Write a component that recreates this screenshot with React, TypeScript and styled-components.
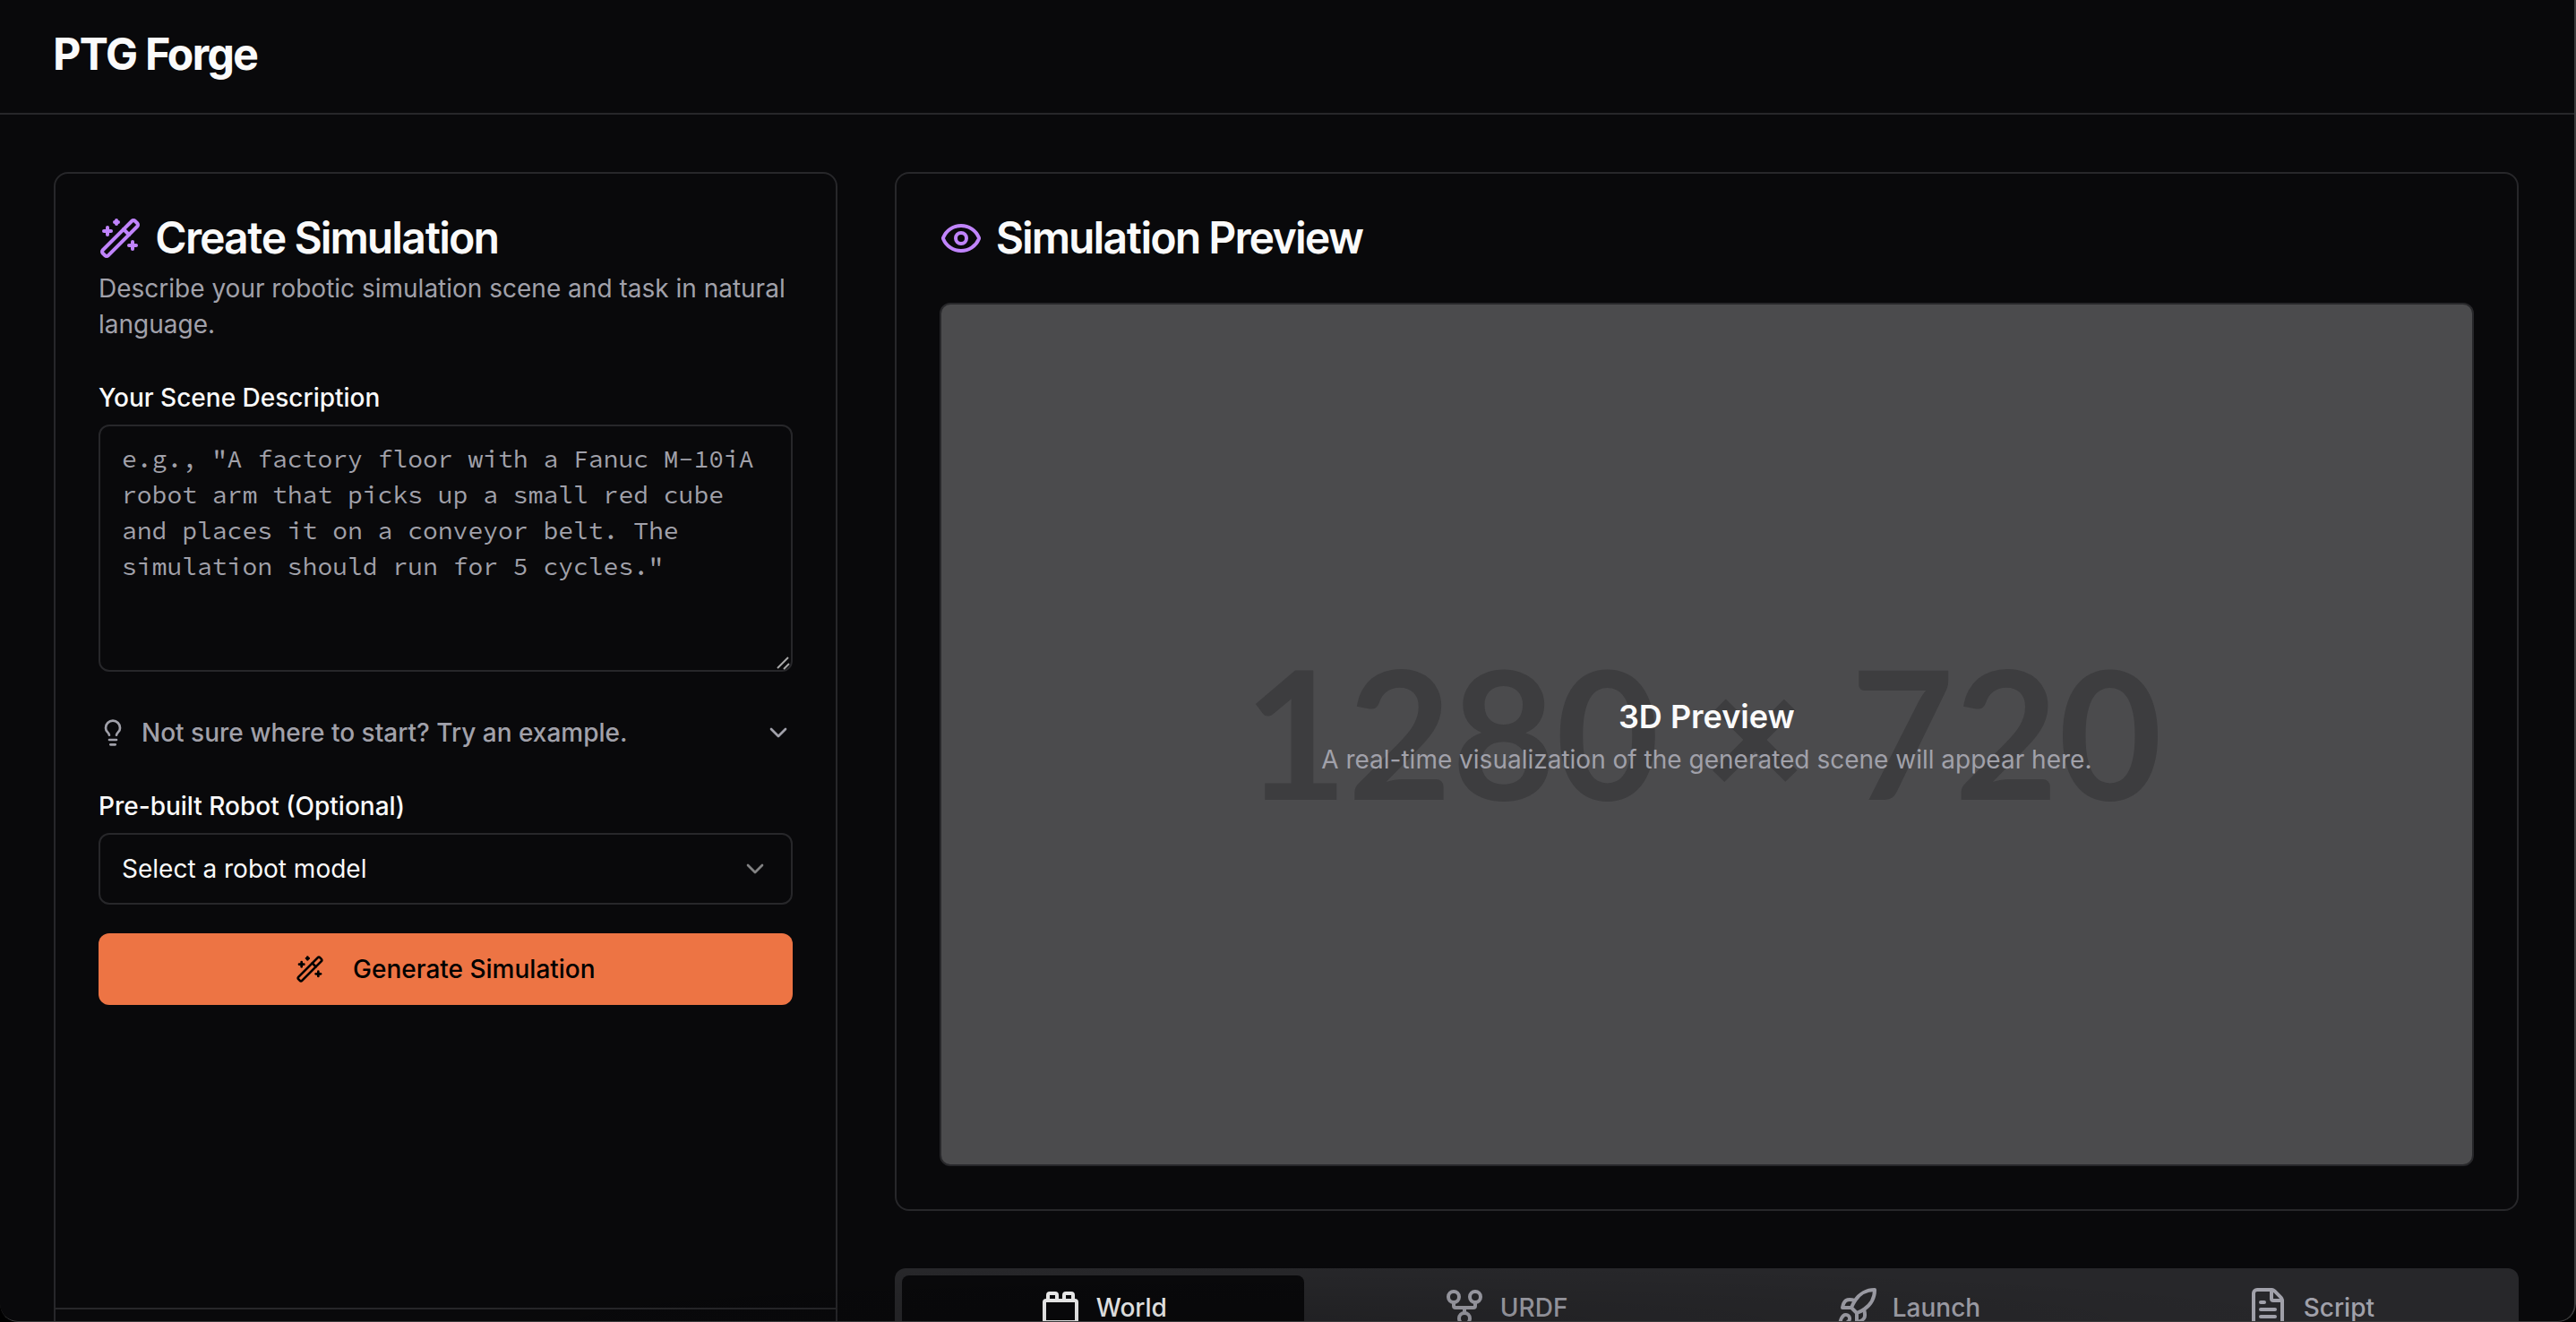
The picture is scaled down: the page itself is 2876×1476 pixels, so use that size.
import React from "react";
import styled, { createGlobalStyle } from "styled-components";
import {
  ChevronDown,
  Eye,
  FileText,
  GitFork,
  Lightbulb,
  Rocket,
  ToyBrick,
  WandSparkles,
} from "lucide-react";

const color = {
  background: "#09090b",
  foreground: "#fafafa",
  muted: "#27272a",
  mutedText: "#a1a1aa",
  primary: "#ed7444",
  accent: "#c084fc",
  frame: "#3b3b3c",
};

const headingFont = `"Inter Tight", "Inter Display", Inter, "Liberation Sans", sans-serif`;

const GlobalStyle = createGlobalStyle`
  *, *::before, *::after { box-sizing: border-box; }
  body {
    margin: 0;
    background: #000;
    color: ${color.foreground};
    font-family: Inter, "Liberation Sans", sans-serif;
    font-size: 28px;
    line-height: 40px;
  }
  h1, h2, h3, p { margin: 0; }
  button, select, textarea { font: inherit; color: inherit; }
`;

const Shell = styled.div`
  position: relative;
  height: 100vh;
  overflow: hidden;
  background: ${color.background};
  border-radius: 0 0 20px 20px;

  &::after {
    content: "";
    position: absolute;
    inset: 0;
    background: radial-gradient(ellipse 42% 64px at 50% 100%, rgba(0, 0, 0, 0.16), transparent);
    border: 2px solid ${color.frame};
    border-width: 0 2px 1px 0;
    border-radius: inherit;
    pointer-events: none;
  }
`;

const Header = styled.header`
  display: flex;
  align-items: center;
  height: 128px;
  padding: 0 64px 4px 60px;
  border-bottom: 2px solid ${color.muted};
`;

const Brand = styled.h1`
  font-family: ${headingFont};
  font-size: 48px;
  line-height: 64px;
  font-weight: 700;
`;

const Main = styled.main`
  display: grid;
  grid-template-columns: repeat(3, minmax(0, 1fr));
  gap: 64px;
  padding: 64px 64px 64px 60px;
`;

const Column = styled.div`
  grid-column: span 2;
  display: flex;
  flex-direction: column;
  gap: 64px;
`;

const Card = styled.section`
  display: flex;
  flex-direction: column;
  border: 2px solid ${color.muted};
  border-radius: 16px;
`;

const CardHeader = styled.div`
  display: flex;
  flex-direction: column;
  gap: 12px;
  padding: 48px;
`;

const CardTitle = styled.h2`
  display: flex;
  align-items: center;
  gap: 16px;
  font-family: ${headingFont};
  font-size: 48px;
  line-height: 48px;
  font-weight: 600;

  svg { color: ${color.accent}; }
`;

const Muted = styled.p`
  color: ${color.mutedText};
`;

const Form = styled.form`
  display: flex;
  flex: 1;
  flex-direction: column;
  gap: 48px;
  min-height: 1030px;
  padding: 0 48px 48px;
`;

const Field = styled.div`
  display: flex;
  flex-direction: column;
  gap: 16px;
`;

const Actions = styled.div`
  display: flex;
  flex-direction: column;
  gap: 32px;
`;

const Label = styled.label`
  line-height: 28px;
  font-weight: 500;
`;

const ControlWrap = styled.div`
  position: relative;
  display: flex;
`;

const TextArea = styled.textarea`
  width: 100%;
  height: 276px;
  padding: 16px 24px;
  resize: none;
  background: ${color.background};
  border: 2px solid ${color.muted};
  border-radius: 12px;
  font-family: "Source Code Pro", "Liberation Mono", monospace;

  &::placeholder { color: ${color.mutedText}; opacity: 1; }
`;

const Grip = styled.svg`
  position: absolute;
  right: 2px;
  bottom: 2px;
  pointer-events: none;
`;

const ExampleToggle = styled.button`
  display: flex;
  align-items: center;
  gap: 16px;
  padding: 0;
  background: none;
  border: 0;
  color: ${color.mutedText};
  font-weight: 500;
  text-align: left;

  span { flex: 1; }
`;

const Select = styled.select`
  width: 100%;
  height: 80px;
  padding: 0 24px;
  appearance: none;
  background: ${color.background};
  border: 2px solid ${color.muted};
  border-radius: 12px;
`;

const SelectArrow = styled(ChevronDown)`
  position: absolute;
  top: 24px;
  right: 26px;
  opacity: 0.5;
  pointer-events: none;
`;

const PrimaryButton = styled.button`
  display: flex;
  align-items: center;
  justify-content: center;
  gap: 32px;
  height: 80px;
  background: ${color.primary};
  border: 0;
  border-radius: 12px;
  color: #000;
  font-weight: 500;
`;

const CardFooter = styled.div`
  min-height: 128px;
  border-top: 2px solid ${color.muted};
`;

const PreviewBody = styled.div`
  padding: 0 48px 48px;
`;

const Preview = styled.div`
  display: grid;
  place-items: center;
  aspect-ratio: 16 / 9;
  background: #4b4b4d;
  border: 2px solid ${color.muted};
  border-radius: 12px;

  > * { grid-area: 1 / 1; }
`;

const Placeholder = styled.div`
  padding: 0 8px 8px 0;
  color: #3d3d3f;
  font-family: Lato, sans-serif;
  font-size: 200px;
  line-height: 240px;
  font-weight: 700;
`;

const PreviewText = styled.div`
  position: relative;
  text-align: center;
`;

const PreviewTitle = styled.h3`
  font-size: 36px;
  line-height: 56px;
  font-weight: 600;
`;

const Tabs = styled.div`
  display: grid;
  grid-template-columns: repeat(4, 1fr);
  padding: 8px;
  background: ${color.muted};
  border-radius: 12px;
`;

const Tab = styled.button<{ $active?: boolean }>`
  display: flex;
  align-items: center;
  justify-content: center;
  gap: 16px;
  padding: 12px 24px;
  background: ${(p) => (p.$active ? color.background : "transparent")};
  border: 0;
  border-radius: 8px;
  color: ${(p) => (p.$active ? color.foreground : color.mutedText)};
  font-weight: 500;
`;

const tabs = [
  { name: "World", Icon: ToyBrick },
  { name: "URDF", Icon: GitFork },
  { name: "Launch", Icon: Rocket },
  { name: "Script", Icon: FileText },
];

export default function App() {
  return (
    <Shell>
      <GlobalStyle />
      <Header>
        <Brand>PTG Forge</Brand>
      </Header>
      <Main>
        <Card>
          <CardHeader>
            <CardTitle>
              <WandSparkles size={48} />
              Create Simulation
            </CardTitle>
            <Muted>
              Describe your robotic simulation scene and task in natural language.
            </Muted>
          </CardHeader>
          <Form onSubmit={(e) => e.preventDefault()}>
            <Field>
              <Label htmlFor="scene">Your Scene Description</Label>
              <ControlWrap>
                <TextArea
                  id="scene"
                  placeholder={
                    'e.g., "A factory floor with a Fanuc M-10iA robot arm that picks up a small red cube and places it on a conveyor belt. The simulation should run for 5 cycles."'
                  }
                />
                <Grip width="18" height="18" viewBox="0 0 18 18" stroke="#a8a8a8" strokeWidth="2">
                  <path d="M3 16 15 4M10 17l6-6" />
                </Grip>
              </ControlWrap>
            </Field>
            <ExampleToggle type="button" aria-expanded="false">
              <Lightbulb size={32} />
              <span>Not sure where to start? Try an example.</span>
              <ChevronDown size={32} />
            </ExampleToggle>
            <Actions>
              <Field>
                <Label htmlFor="robot">Pre-built Robot (Optional)</Label>
                <ControlWrap>
                  <Select id="robot">
                    <option>Select a robot model</option>
                  </Select>
                  <SelectArrow size={32} />
                </ControlWrap>
              </Field>
              <PrimaryButton type="submit">
                <WandSparkles size={32} />
                Generate Simulation
              </PrimaryButton>
            </Actions>
          </Form>
          <CardFooter />
        </Card>
        <Column>
          <Card>
            <CardHeader>
              <CardTitle>
                <Eye size={48} />
                Simulation Preview
              </CardTitle>
            </CardHeader>
            <PreviewBody>
              <Preview>
                <Placeholder>1280 × 720</Placeholder>
                <PreviewText>
                  <PreviewTitle>3D Preview</PreviewTitle>
                  <Muted>
                    A real-time visualization of the generated scene will appear here.
                  </Muted>
                </PreviewText>
              </Preview>
            </PreviewBody>
          </Card>
          <Tabs role="tablist">
            {tabs.map(({ name, Icon }, i) => (
              <Tab key={name} type="button" role="tab" aria-selected={i === 0} $active={i === 0}>
                <Icon size={48} />
                {name}
              </Tab>
            ))}
          </Tabs>
        </Column>
      </Main>
    </Shell>
  );
}
